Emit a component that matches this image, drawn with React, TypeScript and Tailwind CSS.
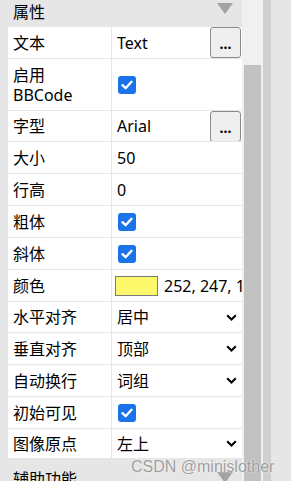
import React from "react";

type Row =
  | { label: React.ReactNode; h: string; kind: "text"; value: string; more?: boolean }
  | { label: React.ReactNode; h: string; kind: "check" }
  | { label: React.ReactNode; h: string; kind: "select"; value: string }
  | { label: React.ReactNode; h: string; kind: "color"; value: string };

const Check = () => (
  <span className="w-[18px] h-[18px] rounded-[3px] bg-[#1a73e8] flex items-center justify-center">
    <svg width="12" height="10" viewBox="0 0 12 10">
      <path d="M1.5 5.2 L4.6 8.2 L10.5 1.8" fill="none" stroke="white" strokeWidth="2.4" strokeLinecap="round" strokeLinejoin="round" />
    </svg>
  </span>
);

const Chevron = () => (
  <svg width="11" height="7" viewBox="0 0 11 7" className="absolute right-[5px]">
    <path d="M1.2 1.2 L5.5 5.5 L9.8 1.2" fill="none" stroke="black" strokeWidth="2" />
  </svg>
);

const Triangle = () => (
  <svg width="16" height="12" viewBox="0 0 16 12" className="absolute left-[217px]">
    <path d="M0 0 H16 L8 11 Z" fill="#a3a3a3" />
  </svg>
);

/**
 * Property grid rows.
 */
const rows: Row[] = [
  { label: "文本", h: "h-[32px]", kind: "text", value: "Text", more: true },
  { label: <span className="leading-[20px]">启用<br />BBCode</span>, h: "h-[52px]", kind: "check" },
  { label: "字型", h: "h-[31px]", kind: "text", value: "Arial", more: true },
  { label: "大小", h: "h-[32px]", kind: "text", value: "50" },
  { label: "行高", h: "h-[32px]", kind: "text", value: "0" },
  { label: "粗体", h: "h-[32px]", kind: "check" },
  { label: "斜体", h: "h-[32px]", kind: "check" },
  { label: "颜色", h: "h-[32px]", kind: "color", value: "252, 247, 107, 255" },
  { label: "水平对齐", h: "h-[31px]", kind: "select", value: "居中" },
  { label: "垂直对齐", h: "h-[32px]", kind: "select", value: "顶部" },
  { label: "自动换行", h: "h-[32px]", kind: "select", value: "词组" },
  { label: "初始可见", h: "h-[32px]", kind: "check" },
  { label: "图像原点", h: "h-[29px]", kind: "select", value: "左上" },
];

const Value: React.FC<{ row: Row }> = ({ row }) => {
  if (row.kind === "check") return <div className="pl-[6px]"><Check /></div>;
  if (row.kind === "color")
    return (
      <div className="flex items-center gap-[6px] pl-[3px] whitespace-nowrap">
        <span className="w-[43px] h-[20px] bg-[#fcf76b] border border-[#7a7a7a]" />
        <span>{row.value}</span>
      </div>
    );
  if (row.kind === "select")
    return (
      <>
        <span className="pl-[5px]">{row.value}</span>
        <Chevron />
      </>
    );
  return (
    <>
      <span className="pl-[5px]">{row.value}</span>
      {row.more && (
        <button className="absolute right-[1px] top-0 w-[31px] h-[31px] rounded-[3px] border border-[#8a8a8a] bg-[#efefef] flex items-end justify-center pb-[6px] leading-none text-[14px] font-bold">
          ...
        </button>
      )}
    </>
  );
};

const App: React.FC = () => {
  return (
    <div
      className="relative w-[291px] h-[481px] overflow-hidden flex bg-[#e6e6e6] text-black text-[16px]"
      style={{ fontFamily: '"Noto Sans", "Noto Sans CJK SC", sans-serif' }}
    >
      <div className="w-[242px] flex flex-col shrink-0">
        <div className="relative h-[28px] flex items-center pl-[13px] pb-[3px]">
          <span>属性</span>
          <svg width="16" height="12" viewBox="0 0 16 12" className="absolute left-[217px] top-[3px]">
            <path d="M0 0 H16 L8 11 Z" fill="#a3a3a3" />
          </svg>
        </div>
        <div className="ml-[8px] flex flex-col bg-white">
          {rows.map((row, i) => (
            <div
              key={i}
              className={`${row.h} flex ${i < rows.length - 1 ? "border-b border-[#e6e6e6]" : ""}`}
            >
              <div className="w-[104px] shrink-0 border-r border-[#e6e6e6] pl-[5px] flex items-center">
                {row.label}
              </div>
              <div className="relative flex-1 flex items-center overflow-hidden">
                <Value row={row} />
              </div>
            </div>
          ))}
        </div>
        <div className="relative mt-[10px] h-[24px] flex items-start pl-[13px]">
          <span className="leading-[20px] mt-[1px]">辅助功能</span>
          <svg width="16" height="12" viewBox="0 0 16 12" className="absolute left-[217px] top-[4px]">
            <path d="M0 0 H16 L8 11 Z" fill="#a3a3a3" />
          </svg>
        </div>
      </div>
      <div className="w-[21px] bg-[#f0f0f0] pt-[65px] pl-[2px] pr-[2px] shrink-0">
        <div className="h-full bg-[#c1c1c1]" />
      </div>
      <div className="w-[8px] bg-[#cfcfcf] shrink-0" />
      <div className="flex-1" />
      <div
        className="absolute left-[131px] top-[455px] text-[16px] text-[#9f9f9f] whitespace-nowrap"
        style={{ fontFamily: '"Liberation Sans", sans-serif', textShadow: "0 0 2px white" }}
      >
        CSDN @minislother
      </div>
    </div>
  );
};

export default App;
